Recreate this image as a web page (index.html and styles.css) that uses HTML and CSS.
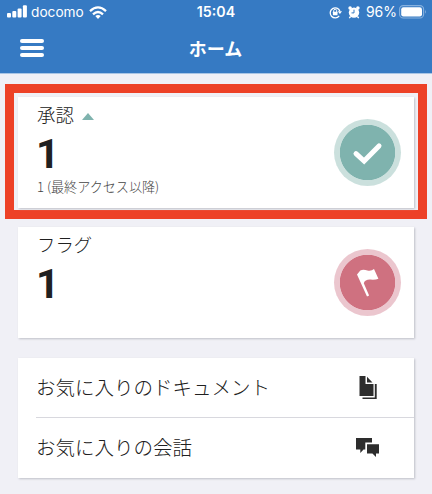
FILE: index.html
```
<!DOCTYPE html>
<html lang="ja">
<head>
<meta charset="utf-8">
<meta name="viewport" content="width=device-width, initial-scale=1">
<title>ホーム</title>
<link rel="stylesheet" href="styles.css">
</head>
<body>
<header class="header">
  <div class="status">
    <div class="status-left">
      <svg class="signal" width="20" height="13" viewBox="0 0 20 13" fill="#fff"><rect x="0" y="8" width="4" height="4.5" rx="1"/><rect x="5.3" y="6" width="4" height="6.5" rx="1"/><rect x="10.6" y="3.4" width="4" height="9.1" rx="1"/><rect x="15.9" y="0.3" width="4" height="12.2" rx="1"/></svg>
      <span class="carrier">docomo</span>
      <svg class="wifi" width="18" height="13" viewBox="0 0 18 13" fill="none" stroke="#fff" stroke-width="2.3"><path d="M1 5.1Q9-2.4 17 5.1"/><path d="M4 8.3Q9 3.7 14 8.3"/><path d="M6.3 10.1Q9 7.9 11.7 10.1L9 12.9Z" fill="#fff" stroke="none"/></svg>
    </div>
    <span class="time">15:04</span>
    <div class="status-right">
      <svg class="lock" width="13" height="13" viewBox="0 0 13 13" fill="none" stroke="#fff"><path d="M10.2 9.9A5 5 0 1 1 10.9 5.2" stroke-width="1.3"/><path d="M8.7 5.2h4.3l-2.1 2.9z" fill="#fff" stroke="none"/><path d="M4.7 6V4.8a1.5 1.5 0 0 1 3 0V6"/><rect x="3.9" y="5.8" width="4.6" height="3.4" rx=".5" fill="#fff" stroke="none"/></svg>
      <svg class="alarm" width="12" height="13" viewBox="0 0 12 13"><g fill="#fff"><circle cx="2.1" cy="2.1" r="1.8"/><circle cx="9.9" cy="2.1" r="1.8"/><circle cx="6" cy="6.6" r="5.2"/><path d="M2 10l1.2 1-1.5 1.5-.9-.8zM10 10l-1.2 1 1.5 1.5.9-.8z"/></g><path d="M6 3.7v3.2H3.5" fill="none" stroke="#367ac3"/></svg>
      <span class="percent">96%</span>
      <svg class="battery" width="28" height="14" viewBox="0 0 28 14"><rect x=".6" y=".6" width="24" height="12.4" rx="3.6" fill="none" stroke="#86b1df" stroke-width="1.1"/><rect x="2.2" y="2.2" width="20.8" height="9.2" rx="2.2" fill="#fff"/><path d="M26 4.8q1.8 2 0 4z" fill="#86b1df"/></svg>
    </div>
  </div>
  <div class="nav">
    <div class="menu"><i></i><i></i><i></i></div>
    <h1 class="title">ホーム</h1>
    <span></span>
  </div>
</header>
<main class="main">
  <div class="highlight">
    <section class="card">
      <div>
        <h2 class="label">承認<i class="triangle"></i></h2>
        <div class="count">1</div>
        <div class="note">1 (最終アクセス以降)</div>
      </div>
      <div class="badge green">
        <svg width="67" height="67" viewBox="0 0 67 67"><path d="M22 34.7l8.1 7.4L45 26.9" fill="none" stroke="#fff" stroke-width="5" stroke-linecap="round" stroke-linejoin="miter"/></svg>
      </div>
    </section>
  </div>
  <section class="card flag-card">
    <div>
      <h2 class="label">フラグ</h2>
      <div class="count">1</div>
    </div>
    <div class="badge pink">
      <svg width="67" height="67" viewBox="0 0 67 67"><path d="M23 25.4L26.3 21.4Q29.4 20 33.4 21.5Q37.5 22.3 40 20.1L44.4 29.8Q41.6 31 36.4 30.6Q30.9 30.4 29.8 34.3L35.1 46.4L33 47.5Z" fill="#fff"/></svg>
    </div>
  </section>
  <nav class="list">
    <div class="row"><span>お気に入りのドキュメント</span>
      <svg width="24" height="24" viewBox="0 0 24 24" fill="#2d2d2d"><path d="M3.5 0h6v8h8v12h-14z"/><path d="M11 .8v5.7h5.5z"/><path d="M18.8 8h1.9v15H6.5v-1.6h12.3z"/></svg>
    </div>
    <div class="row"><span>お気に入りの会話</span>
      <svg width="24" height="24" viewBox="0 0 24 24" fill="#2d2d2d"><path d="M0 2h16v4.5H9.3v7H7.5L4.3 17v-3.5H0z"/><path d="M11 8.2h12v9.3h-3v3.6l-3.6-3.6H11z"/></svg>
    </div>
  </nav>
</main>
</body>
</html>
```
FILE: styles.css
```
* { box-sizing: border-box; }
body {
  margin: 0;
  height: 494px;
  overflow: hidden;
  background: #f0f0f6;
  color: #202020;
  font-family: "Noto Sans CJK JP", sans-serif;
}
h1, h2 { margin: 0; }
svg { display: block; flex: none; }
.header {
  height: 74px;
  background: #367ac3;
  border-bottom: 1px solid #a9c5e5;
  color: #fff;
}
.status {
  height: 24px;
  display: grid;
  grid-template-columns: 1fr auto 1fr;
  padding: 0 5px 0 7px;
  font: 13.5px/24px Inter, sans-serif;
}
.status-left, .status-right { display: flex; align-items: center; }
.status-right { justify-content: flex-end; }
.signal { margin-top: -1px; }
.carrier { margin-left: 4px; width: 58px; font-size: 13.7px; }
.time { margin-right: 2px; font-weight: 600; font-size: 14.2px; }
.alarm { margin-left: 6px; }
.percent { margin: 0 2px 0 6px; font-size: 14px; }
.nav {
  height: 48px;
  display: grid;
  grid-template-columns: 1fr auto 1fr;
  align-items: center;
  padding: 0 21px 0 20px;
}
.menu { display: grid; gap: 3px; width: 24px; }
.menu i { height: 4px; border-radius: 2px; background: #fff; }
.title { font-size: 18px; line-height: 24px; font-weight: 700; }
.main { padding: 10px 5px 0; }
.highlight {
  width: 422px;
  height: 135px;
  border: 9px solid #ed4127;
  padding: 4px;
}
.card {
  display: flex;
  justify-content: space-between;
  width: 396px;
  height: 111px;
  padding: 5px 13px 0 19px;
  background: #fff;
  box-shadow: 1px 1px 2px #bfc0c8;
}
.label {
  display: flex;
  align-items: center;
  height: 27px;
  font-size: 18.4px;
  line-height: 25px;
  font-weight: 300;
}
.label { height: 25px; margin-bottom: 2px; }
.triangle {
  margin: 3px 0 0 8px;
  border: solid transparent;
  border-width: 0 6px 7px;
  border-bottom-color: #7fb3ae;
}
.count {
  height: 48px;
  margin-left: -1px;
  font: 700 41px/50px Roboto, sans-serif;
}
.note { font-size: 13.1px; line-height: 20px; font-weight: 300; color: #444; }
.badge {
  width: 67px;
  height: 67px;
  margin-top: 17px;
  border-radius: 50%;
}
.green { background: radial-gradient(circle, #7fb3ae 27.3px, #cbe0dd 28px); }
.pink { background: radial-gradient(circle, #cf7180 27.3px, #ebc6ce 28px); }
.flag-card { margin: 8px 0 0 13px; }
.list {
  width: 396px;
  height: 120px;
  margin: 20px 0 0 13px;
  padding-left: 18px;
  background: #fff;
  box-shadow: 1px 1px 2px #bfc0c8;
}
.row {
  display: flex;
  align-items: center;
  justify-content: space-between;
  height: 59px;
  padding-right: 34px;
  font-size: 19.5px;
  line-height: 30px;
  font-weight: 300;
}
.row span { margin-top: -1px; }
.row + .row { height: 61px; border-top: 1px solid #d8d8de; }
.row + .row span { margin-top: -2px; }
```
